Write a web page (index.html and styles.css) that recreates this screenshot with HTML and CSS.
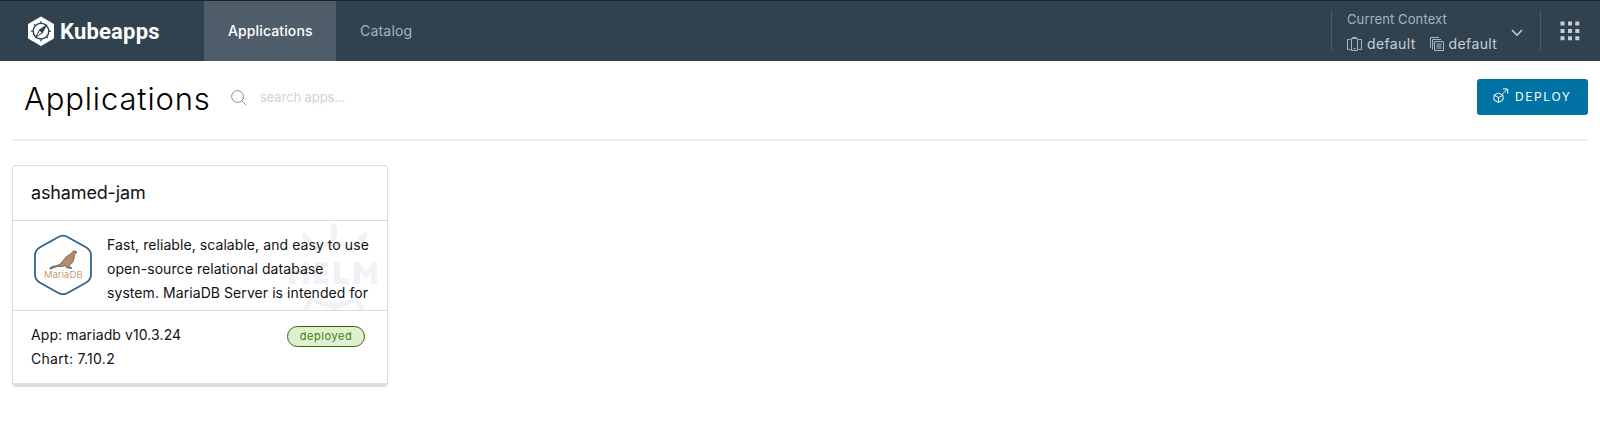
FILE: index.html
```html
<!DOCTYPE html>
<html lang="en">
<head>
<meta charset="utf-8">
<title>Kubeapps</title>
<link rel="stylesheet" href="styles.css">
</head>
<body>
<header class="header">
  <a class="brand">
    <svg class="brand-icon" width="28" height="32" viewBox="0 0 28 32">
      <path d="M14 2.500 26 9.500V23L14 30 2 23V9.500Z" fill="#fff" stroke="#fff" stroke-width="2" stroke-linejoin="round"/>
      <circle cx="14" cy="16.200" r="7.800" fill="none" stroke="#304250" stroke-width="1.400"/>
      <path d="M14 6v2M14 24.500v2M4 16.200h2M22 16.200h2M7 9.200l1.500 1.500M21 23.200l-1.500-1.500" stroke="#304250" stroke-width="1.200"/>
      <path d="M20.500 9 15.800 17.900 12.200 14.500ZM7.500 23.400 12.200 14.500 15.800 17.900Z" fill="#304250"/>
      <path d="M12.600 15.700l2 1.900-4.600 3.500Z" fill="#fff"/>
    </svg>
    <span class="brand-name">Kubeapps</span>
  </a>
  <nav class="nav">
    <a class="nav-link active"><span>Applications</span></a>
    <a class="nav-link"><span>Catalog</span></a>
  </nav>
  <div class="context">
    <div class="context-info">
      <div class="context-label">Current Context</div>
      <div class="context-values">
        <svg width="15" height="14" viewBox="0 0 15 14" fill="none" stroke="currentColor"><path d="M3.500 2.500h-3v10h3M11.500 2.500h3v10h-3M4.500 13.500v-12h6v12zM5.500 1V.5h4V1M6.500 11.500h2"/></svg>
        <span class="ctx-name">default</span>
        <svg class="ns-icon" width="14" height="14" viewBox="0 0 14 14" fill="none" stroke="currentColor"><path d="M.5 11V.5H9M2.500 12.500v-10H11M4.500 4.500h9v9h-9zM6.500 7h5M6.500 9h5M6.500 11h5"/></svg>
        <span class="ctx-name">default</span>
      </div>
    </div>
    <svg class="chevron" width="12" height="8" viewBox="0 0 12 8" fill="none" stroke="currentColor" stroke-width="1.600"><path d="M1 1l5 5.200L11 1"/></svg>
  </div>
  <div class="menu">
    <svg width="20" height="20" viewBox="0 0 20 20" fill="currentColor"><path d="M.5.5h4v4H.5zM8 .5h4v4H8zM15.300.5h4v4h-4zM.5 8h4v4H.5zM8 8h4v4H8zM15.300 8h4v4h-4zM.5 15.300h4v4h-4zM8 15.300h4v4H8zM15.300 15.300h4v4h-4z"/></svg>
  </div>
</header>
<main class="main">
  <section class="page-head">
    <h1 class="title">Applications</h1>
    <div class="search">
      <svg width="16" height="16" viewBox="0 0 16 16" fill="none" stroke="#8c8c8c"><circle cx="6.500" cy="6.500" r="5.900"/><path d="M10.800 10.800 15.200 15.200"/></svg>
      <span class="placeholder">search apps...</span>
    </div>
    <button class="deploy">
      <svg width="16" height="16" viewBox="0 0 16 16" fill="none" stroke="#fff" stroke-width="1"><path d="M5.500 5 10 7.200v4.800L5.500 14.500 1 12V7.200ZM1 7.200l4.500 2.300L10 7.200M5.500 9.500v5M9 6.500 14.500 1M10 1h4.700v4.700"/></svg>
      <span class="deploy-text">DEPLOY</span>
    </button>
  </section>
  <article class="card">
    <div class="card-head"><span>ashamed-jam</span></div>
    <div class="card-body">
      <svg class="helm" width="92" height="88" viewBox="0 0 92 88">
        <g fill="#f1f1f8">
          <ellipse cx="46" cy="10" rx="3.200" ry="9"/>
          <ellipse cx="20" cy="18" rx="3.200" ry="9" transform="rotate(-38 20 18)"/>
          <ellipse cx="73" cy="18" rx="3.200" ry="9" transform="rotate(38 73 18)"/>
          <path d="M43 82h6v6h-6z"/>
        </g>
        <g fill="none" stroke="#f1f1f8" stroke-width="5"><path d="M26 30Q46 12 66 30M22 75Q46 92 70 75M23 79 17 88M69 79 75 88"/></g>
        <path fill="#f1f1f8" d="M1 40h6v8h8v-8h6v22h-6v-9H7v9H1zM26 40h14v5h-8v3.500h7v5h-7V57h8v5H26zM46 40h6v17h9v5H46zM66 40h5l7 10 7-10h4v22h-6V50l-5 7-6-7v12h-6z"/>
      </svg>
      <svg class="app-icon" width="60" height="62" viewBox="0 0 60 62">
        <path d="M25 3.200Q30 .2 35 3.200L52.500 13Q58 16 58 21.500v19Q58 46 52.500 49L35 58.700Q30 61.600 25 58.700L7.500 49Q2 46 2 40.500v-19Q2 16 7.500 13Z" fill="#fff" stroke="#2d638d" stroke-width="1.800"/>
        <path d="M17 33.800c2.500-2 6-1.500 9-3 3-1.500 4.800-6 8-8.500 2.800-1.800 4.500-2.500 6-5 1.500-.8 3-.3 4 1l-2.500 2c-.3 3 0 5-2 8-1.500 2-3 2.500-3.500 4l3 1.900-5-.2-2-2.400c-3 1.500-7 .2-10 1.500L17 35.200z" fill="#b98d62" stroke="#47506b" stroke-width=".8"/>
        <text class="maria" x="11" y="43.500">MariaDB</text>
      </svg>
      <p class="desc">Fast, reliable, scalable, and easy to use<br>open-source relational database<br>system. MariaDB Server is intended for</p>
    </div>
    <div class="card-foot">
      <div class="versions"><div class="app-version">App: mariadb v10.3.24</div><div class="chart-version">Chart: 7.10.2</div></div>
      <span class="badge">deployed</span>
    </div>
  </article>
</main>
</body>
</html>
```

FILE: styles.css
```css
* { box-sizing: border-box; }
body { margin: 0; background: #fff; color: #111; font-family: Inter, "Open Sans", sans-serif; font-size: 14px; }
svg { display: block; flex: none; }
.header { display: flex; height: 61px; background: #304250; border-top: 1px solid #222; color: #c8cfd3; white-space: nowrap; }
.brand { display: flex; width: 204px; padding: 14px 0 0 27px; gap: 5px; }
.brand-name { font: 700 22px/34px Roboto, sans-serif; color: #fff; letter-spacing: .2px; }
.nav { display: flex; width: 232px; }
.nav::after { content: ""; width: 1px; height: 40px; margin: 10px 0 0 auto; background: #495965; }
.nav-link { padding: 0 24px; line-height: 60px; color: #a9b3ba; font-size: 14px; letter-spacing: .2px; }
.nav-link.active { width: 132px; background: #4f5d6a; color: #fff; font-weight: 500; letter-spacing: .12px; }
.context { display: flex; width: 209px; margin-left: auto; }
.context::before, .menu::before { content: ""; width: 1px; height: 40px; margin-top: 10px; background: #495965; }
.context-info { width: 165px; padding: 8px 0 0 15px; }
.context-label { font-size: 13px; line-height: 20px; letter-spacing: .12px; color: #a9b3ba; }
.context-values { display: flex; align-items: center; height: 26px; font-size: 14px; gap: 5px; margin-top: 1px; letter-spacing: .37px; }
.context-values svg { color: #a9b3ba; margin-top: 2px; }
.context-values .ns-icon { margin-left: 9px; }
.chevron { margin: 28px 0 0 14px; }
.menu { display: flex; width: 60px; }
.menu svg { margin: 20px 0 0 19px; }
.main { padding: 0 12px; }
.page-head { display: flex; height: 80px; border-bottom: 2px solid #eee; padding: 18px 0 0 12px; }
.title { margin: 0; width: 207px; font-size: 31px; font-weight: 300; line-height: 40px; color: #000; letter-spacing: .85px; }
.search { display: flex; gap: 13px; padding-top: 11px; }
.placeholder { font-size: 13px; line-height: 15px; color: #d2d2d2; letter-spacing: -.1px; }
.deploy { display: flex; align-items: center; gap: 6px; width: 111px; height: 36px; margin-left: auto; padding: 0 0 0 16px; border: 0; border-radius: 3px; background: #0072a3; color: #fff; font: 400 12px Inter, sans-serif; letter-spacing: 1.6px; }
.deploy svg { margin-top: -2px; }
.deploy-text { margin-top: -2px; }
.card { width: 376px; height: 222px; margin-top: 24px; border: 1px solid #ddd; border-bottom-width: 4px; border-radius: 4px; }
.card-head { height: 55px; padding-left: 18px; border-bottom: 1px solid #ddd; font-size: 18px; line-height: 54px; letter-spacing: -.15px; }
.card-body { position: relative; display: flex; height: 90px; padding: 13px 0 0 20px; border-bottom: 1px solid #ddd; overflow: hidden; }
.helm { position: absolute; left: 275px; top: 1px; }
.app-icon { margin-right: 14px; }
.maria { font: 300 9.500px Inter, sans-serif; fill: #b0804f; letter-spacing: .15px; }
.desc { position: relative; margin: -1px 0 0; line-height: 24px; white-space: nowrap; letter-spacing: .07px; }
.card-foot { display: flex; justify-content: space-between; padding: 12px 22px 0 18px; line-height: 24px; }
.app-version { letter-spacing: .1px; }
.chart-version { letter-spacing: .3px; }
.badge { height: 21px; width: 78px; margin-top: 3px; border: 1px solid #306b00; border-radius: 11px; background: #dff0d0; color: #42810e; font-size: 11px; line-height: 18px; text-align: center; letter-spacing: .55px; }
```
